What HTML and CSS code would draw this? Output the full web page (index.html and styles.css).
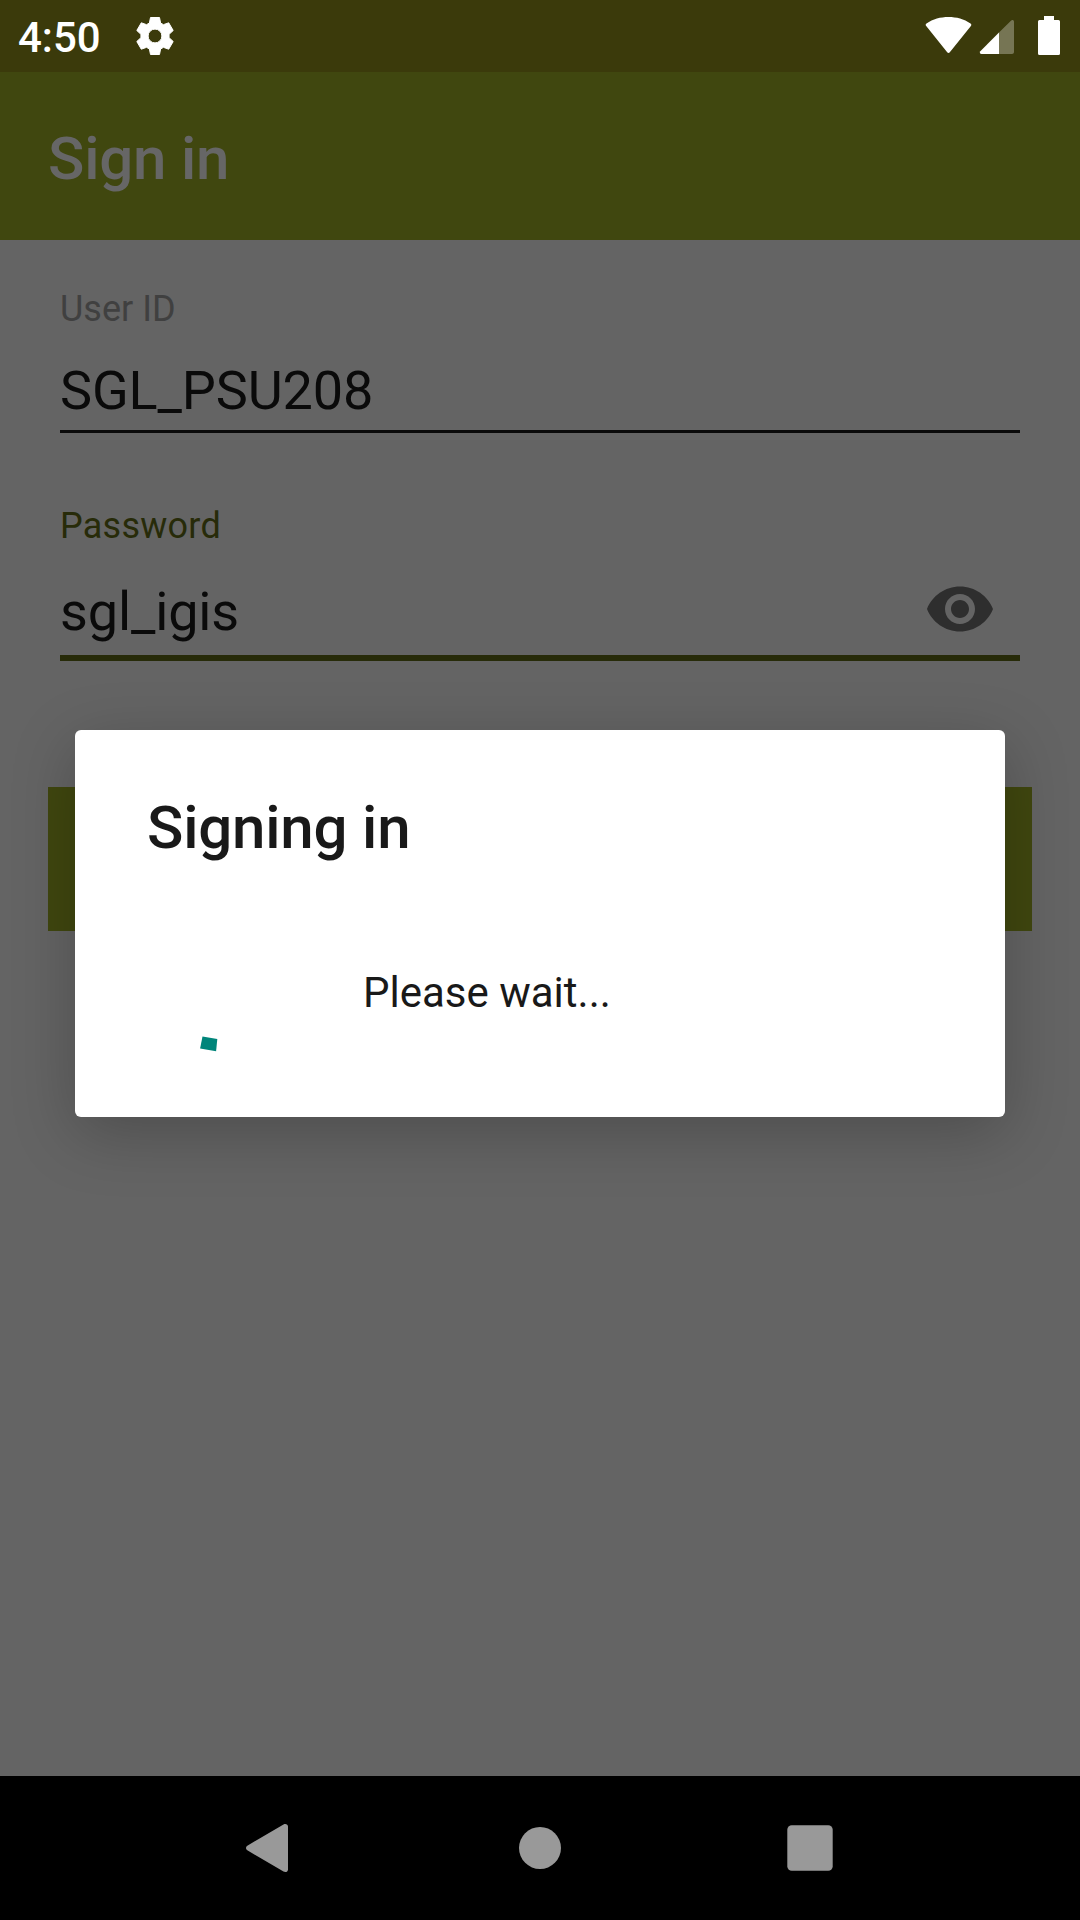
FILE: index.html
```html
<!DOCTYPE html>
<html lang="en">
<head>
<meta charset="utf-8">
<title>Sign in</title>
<link rel="stylesheet" href="styles.css">
</head>
<body>
<div class="screen">
  <header class="status-bar">
    <span class="clock">4:50</span>
    <svg class="gear" viewBox="-23 -23 46 46"><path d="M-5.600-13-4.500-18.500H4.500L5.600-13 8.460-11.350 13.700-13.200 18.200-5.500 14.060-1.650V1.650L18.200 5.500 13.700 13.200 8.460 11.350 5.600 13 4.500 18.500H-4.500L-5.600 13-8.460 11.350-13.700 13.200-18.200 5.500-14.060 1.650V-1.650L-18.200-5.500-13.700-13.200-8.460-11.350zM0-6.900a6.900 6.900 0 1 0 0 13.800 6.900 6.900 0 1 0 0-13.800z"/></svg>
    <svg class="system-icons" viewBox="0 0 136 40">
      <path d="M1.400 10.300C.4 9.400.5 8.200 1.500 7.500C8 3 15.500 1 23.500 1s15.500 2 22 6.500c1 .7 1.100 1.900.2 2.800L24.800 36.200c-.7.900-1.900.900-2.600 0z"/>
      <path class="faint" d="M74 16.500 86.200 4.600c1-1 2.800-.5 2.800 1.200V36c0 1.200-.8 2-2 2H74z"/>
      <path d="M74 16.500V38H56.500c-1.600 0-2.200-1.600-1.200-2.700z"/>
      <path d="M119 0h10v4h4.500q1.500 0 1.500 1.500v32q0 1.500-1.500 1.500h-19q-1.500 0-1.500-1.500v-32q0-1.500 1.500-1.500h4.500z"/>
    </svg>
  </header>
  <div class="app-bar"><h1 class="title">Sign in</h1></div>
  <main class="form">
    <div class="field user">
      <div class="label">User ID</div>
      <div class="value">SGL_PSU208</div>
    </div>
    <div class="field password">
      <div class="label">Password</div>
      <div class="value-row">
        <div class="value">sgl_igis</div>
        <svg class="eye" viewBox="0 0 24 24"><path d="M12 4.500C7 4.500 2.730 7.610 1 12c1.730 4.390 6 7.500 11 7.500s9.270-3.110 11-7.500c-1.730-4.390-6-7.500-11-7.500zM12 17c-2.760 0-5-2.240-5-5s2.240-5 5-5 5 2.240 5 5-2.240 5-5 5zm0-8c-1.660 0-3 1.340-3 3s1.340 3 3 3 3-1.340 3-3-1.340-3-3-3z"/></svg>
      </div>
    </div>
    <div class="submit"></div>
  </main>
  <nav class="nav-bar">
    <svg viewBox="0 0 60 60"><path d="M7.300 27.700 43.500 6.400C45.500 5.300 48 6.200 48 8.500v43c0 2.300-2.500 3.200-4.500 2.100L7.300 32.300c-1.700-1-1.700-3.600 0-4.600z"/></svg>
    <svg viewBox="0 0 60 60"><circle cx="30" cy="30" r="21"/></svg>
    <svg viewBox="0 0 60 60"><rect x="7.300" y="7.300" width="45.400" height="45.400" rx="4.500"/></svg>
  </nav>
  <section class="dialog">
    <h2 class="dialog-title">Signing in</h2>
    <div class="progress">
      <svg class="spinner" viewBox="0 0 144 144"><path d="M55.500 108.500 70.300 111.100 69.100 123.200 53.100 120.500z"/></svg>
      <p class="message">Please wait...</p>
    </div>
  </section>
</div>
</body>
</html>
```
FILE: styles.css
```css
* { box-sizing: border-box; }
body, h1, h2, p { margin: 0; }
svg { display: block; flex: none; }

.screen {
  position: relative;
  display: flex;
  flex-direction: column;
  width: 1080px;
  height: 1920px;
  overflow: hidden;
  background: #646464;
  font-family: Roboto, sans-serif;
}

.status-bar {
  display: flex;
  align-items: flex-start;
  height: 72px;
  padding: 13px 19px 0 18px;
  background: #3b3a0b;
  color: #fff;
}
.clock { width: 114px; font-size: 42px; font-weight: 500; line-height: 49px; }
.gear {
  width: 46px;
  height: 46px;
  fill: #fff;
  stroke: #fff;
  stroke-width: 1;
  stroke-linejoin: round;
}
.system-icons { width: 136px; height: 40px; margin: 3px 0 0 auto; fill: #fff; }
.faint { opacity: .3; }

.app-bar { height: 168px; padding: 52px 48px 0; background: #40470f; }
.title { color: #666; font-size: 60px; font-weight: 500; line-height: 70px; letter-spacing: -.2px; }

.form { flex: 1; padding: 48px 48px 0; }
.field { margin: 0 12px; }
.label { font-size: 36px; line-height: 42px; }
.value { color: #0a0a0a; font-size: 54px; line-height: 63px; letter-spacing: -.13px; }
.user { height: 145px; border-bottom: 3px solid #0a0a0a; }
.user .label { color: #404040; }
.user .value { margin-top: 29px; }
.password { height: 156px; margin-top: 72px; border-bottom: 6px solid #272b09; }
.password .label { color: #272b09; letter-spacing: .25px; }
.value-row {
  display: flex;
  justify-content: space-between;
  align-items: flex-start;
  padding: 26px 24px 0 0;
}
.password .value { margin-top: 7px; }
.eye { width: 72px; height: 72px; fill: #2e2e2e; }
.submit { height: 144px; margin-top: 126px; background: #40470f; }

.nav-bar {
  display: flex;
  justify-content: center;
  align-items: center;
  gap: 210px;
  height: 144px;
  background: #000;
}
.nav-bar svg { width: 60px; height: 60px; fill: #999; }

.dialog {
  position: absolute;
  top: 730px;
  left: 75px;
  width: 930px;
  height: 387px;
  padding: 63px 72px 0;
  border-radius: 6px;
  background: #fff;
  color: #191919;
  box-shadow: 0 16px 64px rgba(0, 0, 0, .23);
}
.dialog-title { font-size: 60px; font-weight: 500; line-height: 70px; letter-spacing: -.2px; }
.progress { display: flex; align-items: flex-start; margin-top: 65px; }
.spinner { width: 144px; height: 144px; fill: #00857a; }
.message { margin: 40px 0 0 72px; font-size: 42px; line-height: 49px; }
```
